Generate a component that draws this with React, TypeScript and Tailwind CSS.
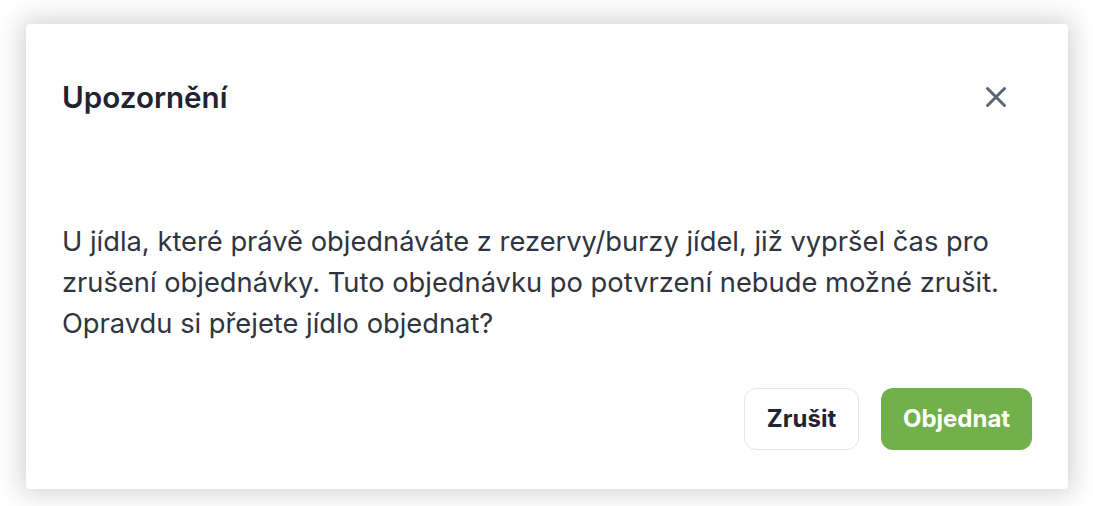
import React from 'react';

export default function App() {
  return (
    <div className="min-h-[506px] w-full bg-white px-[26px] pt-[24px] pb-[17px]" style={{ fontFamily: 'Inter, "Noto Sans", sans-serif' }}>
      <div className="h-[465px] w-[1042px] rounded-[4px] bg-white shadow-[0_0_24px_6px_rgba(0,0,0,0.16)] px-9 flex flex-col">
        <div className="flex items-center justify-between pt-[52px]">
          <h2 className="text-[29.6px] leading-[42px] font-semibold text-[#1f2430]">Upozornění</h2>
          <button className="mr-[19px] text-[#5b6574]" aria-label="Zavřít">
            <svg className="w-[34px] h-[34px]" viewBox="0 0 24 24" fill="none" stroke="currentColor" strokeWidth={2.1} strokeLinecap="round">
              <path d="M18 6L6 18M6 6l12 12" />
            </svg>
          </button>
        </div>
        <p className="mt-[103px] text-[27.3px] leading-[41px] text-[#2f3540]">
          U jídla, které právě objednáváte z rezervy/burzy jídel, již vypršel čas pro zrušení objednávky. Tuto objednávku po potvrzení nebude možné zrušit. Opravdu si přejete jídlo objednat?
        </p>
        <div className="mt-auto mb-[39px] flex justify-end gap-[22px]">
          <button className="h-[62px] w-[115px] rounded-[12px] border border-[#e3e6ea] bg-white text-[24px] font-bold text-[#1f2430]">
            Zrušit
          </button>
          <button className="h-[62px] w-[151px] rounded-[12px] bg-[#72b04b] text-[24px] font-bold text-white">
            Objednat
          </button>
        </div>
      </div>
    </div>
  );
}
